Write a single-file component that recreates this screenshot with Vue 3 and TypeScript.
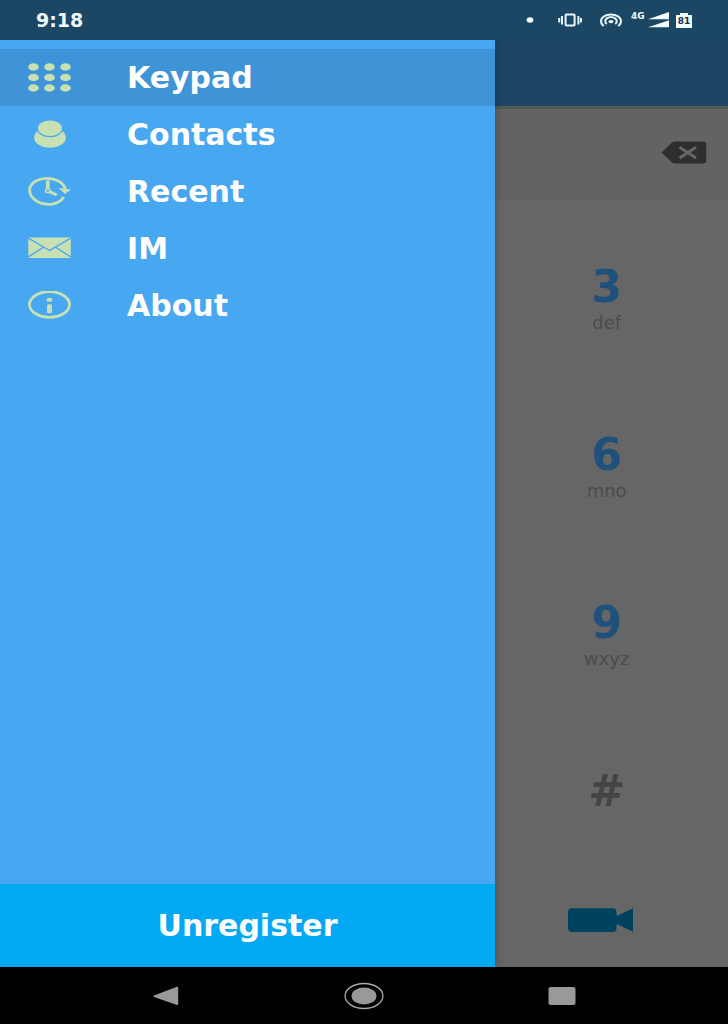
<script setup lang="ts">
import { ref } from 'vue'

type IconName = 'keypad' | 'contacts' | 'recent' | 'im' | 'about'

interface MenuItem {
  icon: IconName
  label: string
}

interface Key {
  symbol: string
  letters: string
}

const items: MenuItem[] = [
  { icon: 'keypad', label: 'Keypad' },
  { icon: 'contacts', label: 'Contacts' },
  { icon: 'recent', label: 'Recent' },
  { icon: 'im', label: 'IM' },
  { icon: 'about', label: 'About' },
]

const keys: Key[] = [
  { symbol: '3', letters: 'def' },
  { symbol: '6', letters: 'mno' },
  { symbol: '9', letters: 'wxyz' },
  { symbol: '#', letters: '' },
]

const dots = [5.5, 21.5, 37.5].flatMap((x) => [4, 14.5, 25].map((y) => ({ x, y })))

const active = ref<IconName>('keypad')
</script>

<template>
  <div class="phone">
    <header class="status">
      <time class="clock">9:18</time>
      <svg class="dot" width="8" height="8" viewBox="0 0 8 8" aria-hidden="true">
        <ellipse cx="4" cy="4" rx="3.4" ry="2.7" fill="#f2fbff" />
      </svg>
      <svg class="vibrate" width="24" height="14" viewBox="0 0 24 14" aria-hidden="true">
        <g fill="none" stroke="#e6f4fb" stroke-width="2">
          <rect x="7.6" y="1.5" width="9" height="11" rx="0.8" />
          <path d="M4 3v8.500M20.400 3v8.500M1.200 5v4.500M23 5v4.500" />
        </g>
      </svg>
      <svg class="hotspot" width="24" height="16" viewBox="0 0 24 16" aria-hidden="true">
        <g fill="none" stroke="#e6f4fb" stroke-width="2">
          <path d="M4.800 14A10 6.800 0 1 1 19.200 14" />
          <path d="M7.800 12A5.800 4 0 1 1 16.200 12" />
        </g>
        <ellipse cx="12" cy="9.600" rx="2.600" ry="1.700" fill="#f2fbff" />
      </svg>
      <span class="network">4G</span>
      <svg class="signal" width="21" height="16" viewBox="0 0 21 16" aria-hidden="true">
        <path d="M0 7.2L21 0v7.2zM0 15.2L21 8.2v7z" fill="#f2fbff" />
      </svg>
      <span class="battery">81</span>
    </header>

    <div class="screen">
      <main class="dialer">
        <div class="toolbar"></div>
        <div class="display">
          <button class="plain" type="button" aria-label="Delete">
            <svg width="46" height="24" viewBox="0 0 46 24">
              <path d="M0.5 11.5L11 1.5Q12.5 0.5 14 0.5H42.5Q45.2 0.5 45.2 2.5V20.5Q45.2 22.6 42.5 22.6H14Q12.5 22.6 11 21.5Z" fill="#2e2e2e" />
              <path d="M18.5 6.3L35 17M35 6.3L18.5 17" stroke="#666" stroke-width="3" />
            </svg>
          </button>
        </div>
        <div class="keys">
          <button v-for="key in keys" :key="key.symbol" class="plain key" type="button">
            <span class="symbol" :class="{ mark: !key.letters }">{{ key.symbol }}</span>
            <span v-if="key.letters" class="letters">{{ key.letters }}</span>
          </button>
        </div>
        <div class="calls">
          <button class="plain call" type="button" aria-label="Video call">
            <svg width="78" height="24" viewBox="0 0 78 24">
              <rect x="0" y="0.3" width="48.5" height="23.7" rx="4" fill="#00435f" />
              <path d="M48 8.2L65 0.3V23.7L48 15.8Z" fill="#00435f" />
            </svg>
          </button>
        </div>
      </main>

      <aside class="drawer">
        <nav class="menu">
          <button
            v-for="item in items"
            :key="item.icon"
            class="plain item"
            :class="{ active: active === item.icon }"
            type="button"
            @click="active = item.icon"
          >
            <svg class="icon" width="43" height="29" viewBox="0 0 43 29" aria-hidden="true">
              <g v-if="item.icon === 'keypad'" fill="#c8e1b2">
                <ellipse v-for="d in dots" :key="`${d.x}-${d.y}`" :cx="d.x" :cy="d.y" rx="5.4" ry="3.7" />
              </g>
              <g v-else-if="item.icon === 'contacts'" fill="#c8e1b2">
                <ellipse cx="22" cy="17.5" rx="15.800" ry="10.300" />
                <ellipse cx="22" cy="8.300" rx="12.600" ry="8.400" stroke="#48a7f1" stroke-width="1.200" />
              </g>
              <g v-else-if="item.icon === 'recent'" fill="none" stroke="#c8e1b2">
                <path d="M35.800 20C31 27.700 18 29.700 9 24.400C-1 18-0.500 8.700 8 4C18 -1 33.500 1.500 37.500 12" stroke-width="2.800" />
                <path d="M30.500 11L43 12.500L37 17Z" fill="#c8e1b2" stroke="none" />
                <path d="M19.800 3.500V12" stroke-width="3.600" />
                <path d="M21.500 14.700L28.800 18" stroke-width="3" />
                <ellipse cx="19.800" cy="13.800" rx="2.300" ry="1.800" fill="#48a7f1" stroke-width="1.500" />
              </g>
              <g v-else-if="item.icon === 'im'">
                <rect x="0.3" y="3.500" width="42.500" height="20.500" fill="#c8e1b2" />
                <path d="M0.3 4L21.500 16.500L42.800 4M0.3 23L15.700 13M42.800 23L27.300 13" fill="none" stroke="#48a7f1" stroke-width="1.400" />
              </g>
              <g v-else fill="#c8e1b2">
                <ellipse cx="21.500" cy="13.500" rx="20" ry="12.800" fill="none" stroke="#c8e1b2" stroke-width="2.800" />
                <ellipse cx="21.500" cy="8.800" rx="3" ry="2" />
                <rect x="19" y="13.300" width="5" height="9" rx="1.500" />
              </g>
            </svg>
            <span>{{ item.label }}</span>
          </button>
        </nav>
        <button class="plain unregister" type="button">Unregister</button>
      </aside>
    </div>

    <footer class="system">
      <button class="plain" type="button" aria-label="Back">
        <svg width="26" height="20" viewBox="0 0 26 20">
          <path d="M1 9.500L24 0.800Q25.200 0.500 25.200 1.500V18.300Q25.200 19.400 24 19L1 11Q-0.300 10.300 1 9.500Z" fill="#999" />
        </svg>
      </button>
      <button class="plain" type="button" aria-label="Home">
        <svg width="40" height="28" viewBox="0 0 40 28">
          <ellipse cx="20" cy="14" rx="18.900" ry="12.500" fill="none" stroke="#aaa" stroke-width="1.300" />
          <ellipse cx="20" cy="14" rx="12.500" ry="8.500" fill="#999" />
        </svg>
      </button>
      <button class="plain" type="button" aria-label="Overview">
        <svg width="28" height="18" viewBox="0 0 28 18">
          <rect x="0.5" y="0" width="27" height="18" rx="2" fill="#999" />
        </svg>
      </button>
    </footer>
  </div>
</template>

<style>
body {
  margin: 0;
}
</style>

<style scoped>
.phone {
  display: flex;
  flex-direction: column;
  min-height: 100vh;
  background: #666;
  font-family: "DejaVu Sans", Verdana, sans-serif;
}

.plain {
  margin: 0;
  padding: 0;
  border: 0;
  background: none;
  color: inherit;
  font: inherit;
  cursor: pointer;
}

svg {
  display: block;
}

.status {
  display: flex;
  align-items: center;
  box-sizing: border-box;
  height: 40px;
  padding: 0 36px;
  background: #1b4765;
  color: #f2fbff;
}

.clock {
  flex: 1;
  font-size: 19px;
  font-weight: 700;
  line-height: 20px;
}

.vibrate {
  margin-left: 24px;
}

.hotspot {
  margin-left: 17px;
}

.network {
  width: 17px;
  margin-left: 8px;
  padding-bottom: 8px;
  font-size: 9px;
  font-weight: 700;
  line-height: 10px;
}

.battery {
  position: relative;
  width: 16px;
  height: 13px;
  margin: 2px 0 0 7px;
  background: #f2fbff;
  color: #16303f;
  font-size: 9px;
  font-weight: 700;
  line-height: 12px;
  text-align: center;
}

.battery::before {
  content: "";
  position: absolute;
  top: -2px;
  left: 4px;
  width: 8px;
  height: 2px;
  background: #f2fbff;
}

.screen {
  position: relative;
  display: flex;
  flex: 1;
  flex-direction: column;
}

.dialer {
  display: flex;
  flex: 1;
  flex-direction: column;
}

.toolbar {
  height: 66px;
  background: #1e4563;
}

.display {
  display: flex;
  align-items: center;
  justify-content: flex-end;
  box-sizing: border-box;
  height: 94px;
  padding: 0 21px 3px 0;
  border-top: 3px solid #565a56;
  background: #636361;
}

.keys {
  display: grid;
  flex: 1;
  grid-template-columns: repeat(3, 1fr);
  grid-template-rows: repeat(4, 1fr);
}

.key {
  display: flex;
  grid-column: 3;
  flex-direction: column;
  align-items: center;
  padding-top: 65px;
}

.symbol {
  color: #20517a;
  font-size: 44px;
  font-weight: 700;
  line-height: 44px;
}

.mark {
  color: #444;
}

.letters {
  color: #4c4c4c;
  font-size: 18px;
  line-height: 28px;
}

.calls {
  display: grid;
  grid-template-columns: repeat(3, 1fr);
  height: 95px;
}

.call {
  display: flex;
  grid-column: 3;
  align-items: center;
  justify-content: center;
}

.drawer {
  position: absolute;
  inset: 0 auto 0 0;
  display: flex;
  flex-direction: column;
  justify-content: space-between;
  width: 68%;
  background: #48a7f1;
  box-shadow: 0 0 8px rgba(0, 0, 0, 0.25);
  clip-path: inset(0 -12px 0 0);
  color: #fff;
  font-size: 30px;
  font-weight: 700;
}

.menu {
  display: flex;
  flex-direction: column;
  padding-top: 9px;
}

.item {
  display: flex;
  align-items: center;
  gap: 56px;
  height: 57px;
  padding-left: 28px;
  line-height: 36px;
}

.active {
  background: #3f94d7;
}

.unregister {
  height: 83px;
  background: #04a9f5;
}

.system {
  display: grid;
  grid-template-columns: repeat(3, 1fr);
  height: 57px;
  padding: 0 67px;
  background: #000;
}

.system .plain {
  display: flex;
  align-items: center;
  justify-content: center;
}
</style>
